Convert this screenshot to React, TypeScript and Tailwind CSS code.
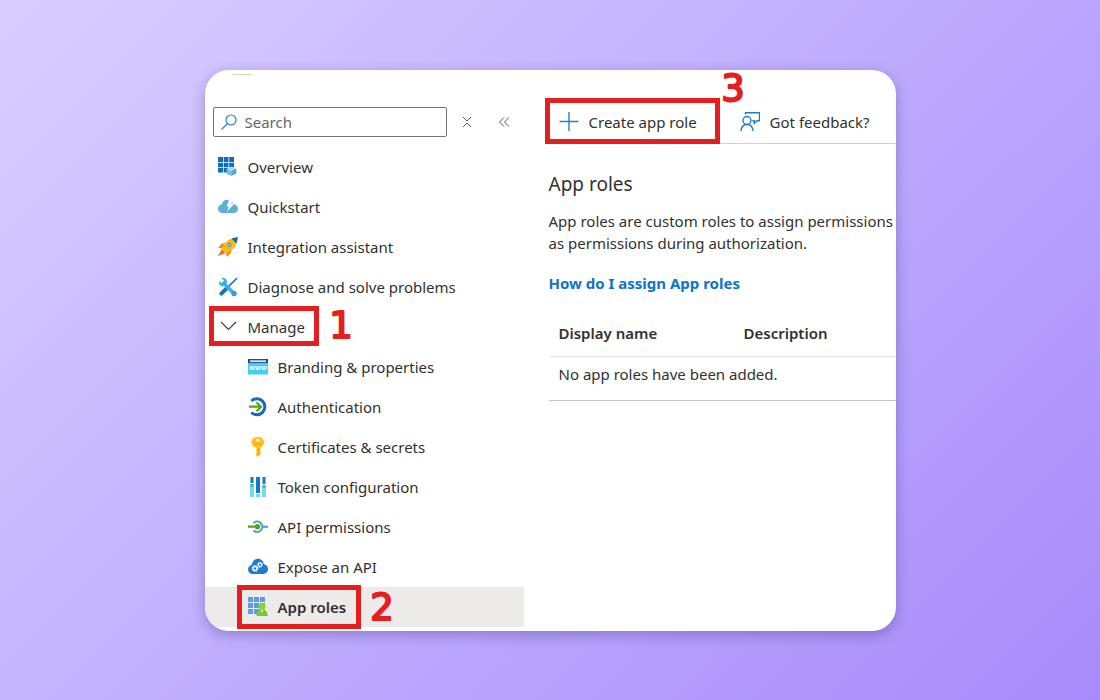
import type { ReactNode } from 'react';

interface NavItem {
  label: string;
  icon: ReactNode;
}

const icon = 'block size-5 shrink-0';

function OverviewIcon() {
  return (
    <svg className={icon} viewBox="0 0 20 20">
      <path fill="#0f6cbd" d="M0 0h5v5H0zM5.700 0h4.800v5H5.700zM11.200 0H16v5h-4.800zM0 5.700h5v4.600H0zM5.700 5.700h4.800v4.600H5.700zM11.200 5.700H16v4.600h-4.800zM0 11h5v4.500H0zM5.700 11h4.800v4.500H5.700z" />
      <path fill="#a5ddf4" d="M8.500 12l5-2.500 4.800 2-5 2.500z" />
      <path fill="#78c0ea" d="M8.500 12l4.800 2v5L8.500 17z" />
      <path fill="#559fd8" d="M18.300 11.500v5L13.300 19v-5z" />
    </svg>
  );
}

function QuickstartIcon() {
  return (
    <svg className={icon} viewBox="0 0 20 20">
      <path fill="#5ab0d6" d="M4.500 16A4.400 4.400 0 0 1 0 11.700c0-2.200 1.600-3.800 3.700-4.100C4.300 4.500 6.500 2.700 9.300 2.700c2.900 0 5 1.800 5.700 4.600 2.800 0 5 1.900 5 4.400 0 2.400-1.900 4.300-4.400 4.300z" />
      <path fill="#fff" d="M11.300 2H16l-3 5h3L9 14.500l2-5H8.500z" />
    </svg>
  );
}

function RocketIcon() {
  return (
    <svg className={icon} viewBox="0 0 20 20">
      <path fill="#f78d1e" d="M8 6L3.500 6.500 0 11l5 .5zM13.500 11.500l-.5 4.500L8.500 20 8 14z" />
      <path fill="#ef6c1a" d="M4 12L0 19 7.500 16z" />
      <path fill="#ffb81c" d="M14 1.300C9.500 2.800 6 6.500 3.500 11.500L8.500 16c5-2 9-6 10.500-10.500z" />
      <path fill="#1464a5" d="M20 0l-6.500 1.500 5 5z" />
      <circle cx="11.500" cy="8" r="2" fill="#2a86c8" />
      <circle cx="11.500" cy="8" r="1.100" fill="#b9e4f8" />
    </svg>
  );
}

function ToolsIcon() {
  return (
    <svg className={icon} viewBox="0 0 20 20" fill="none" strokeLinecap="round">
      <path stroke="#1674c5" strokeWidth="1.700" d="M18.500 1.500L9 11" />
      <path stroke="#1674c5" strokeWidth="4" d="M8 12l-4.700 4.700" />
      <path stroke="#32b4e3" strokeWidth="3.500" d="M5.500 6L16 16.500" />
      <path fill="#32b4e3" d="M3.500 1L6 3.500 5.600 6 3.500 6.200 1.200 4C.3 6.500 2 9.300 4.500 9.300 7 9.300 9.300 7 9 4.500 8.800 2 6 .3 3.500 1z" />
      <circle cx="16" cy="16.500" r="2.700" fill="#2a9fdb" />
    </svg>
  );
}

function BrandingIcon() {
  return (
    <svg className={icon} viewBox="0 0 20 20">
      <path fill="#43cff0" d="M0 6h20v11.500H0z" />
      <path fill="#0f4f96" d="M0 2h20v4H0z" />
      <path fill="#d9edf9" d="M2 3.300h16v1.800H2z" />
      <text
        x="10"
        y="13"
        textAnchor="middle"
        fontSize="7"
        fill="#fff"
        className="font-['Noto_Sans',sans-serif] font-semibold"
      >
        www
      </text>
    </svg>
  );
}

function AuthenticationIcon() {
  return (
    <svg className={icon} viewBox="0 0 20 20" fill="none">
      <path stroke="#0f6cbd" strokeWidth="3" d="M3.300 4A8 8 0 1 1 3.300 15.500" />
      <path stroke="#56a60f" strokeWidth="2.200" d="M1 9.700h12M8.500 5.200L13 9.700l-4.500 4.500" />
    </svg>
  );
}

function KeyIcon() {
  return (
    <svg className={icon} viewBox="0 0 20 20">
      <path fill="#ffbe1a" d="M9 0h1.500C14 0 16 2.500 16 5.300c0 2.500-1.300 4.400-3.500 5.200v7L9.700 20 8 18v-2l1-1-1-1v-1.200l1-1-1-1v-.3C5 9.700 3.500 7.800 3.500 5.300 3.500 2.500 5.500 0 9 0z" />
      <circle cx="9.800" cy="3.200" r="1.700" fill="#fff3d1" />
      <path fill="#e8a316" d="M7 6.500h5.500v1H7zM10.500 11h1v6.500h-1z" />
    </svg>
  );
}

function TokenIcon() {
  return (
    <svg className={icon} viewBox="0 0 20 20">
      <path fill="#6edcf0" d="M2 7h4v13H2zM8 17h4v3H8zM14 8h4v12h-4z" />
      <path fill="#1677c8" d="M2.500 0h3v6h-3zM8 0h4v16H8zM14.500 0h3v7h-3z" />
      <path fill="#43bde0" d="M2 7h4v3H2zM14 8h4v3h-4z" />
    </svg>
  );
}

function PermissionsIcon() {
  return (
    <svg className={icon} viewBox="0 0 20 20" fill="none">
      <path stroke="#3f9dc9" strokeWidth="2" d="M5.500 6A5.200 5.200 0 1 1 5.500 13.500M15 9.700h5" />
      <path stroke="#56a60f" strokeWidth="2.200" d="M0 9.700h9" />
      <circle cx="9.500" cy="9.700" r="2.700" fill="#56a60f" />
    </svg>
  );
}

function ExposeIcon() {
  return (
    <svg className={icon} viewBox="0 0 20 20">
      <path fill="#217bd3" d="M4.500 17A4.500 4.500 0 0 1 0 12.500C0 10.200 1.600 8.400 3.700 8 4.300 4.300 6.700 1.700 10 1.700c3.200 0 5.500 2.400 5.900 5.600 2.400.3 4.100 2.300 4.100 4.800 0 2.700-2 4.900-4.700 4.900z" />
      <circle cx="7" cy="11.500" r="2" fill="none" stroke="#fff" strokeWidth="1.300" />
      <circle cx="7" cy="11.500" r="3" fill="none" stroke="#fff" strokeDasharray="1.200 1.200" />
      <circle cx="12" cy="7.800" r="1.700" fill="none" stroke="#fff" strokeWidth="1.200" />
      <circle cx="12" cy="7.800" r="2.600" fill="none" stroke="#fff" strokeDasharray="1 1" />
    </svg>
  );
}

function AppRolesIcon() {
  return (
    <svg className={icon} viewBox="0 0 20 20">
      <path fill="#5e9be6" d="M0 0h5v5H0zM6 0h5v5H6zM12 0h5v5h-5zM0 6h5v5H0zM6 6h5v5H6zM12 6h5v5h-5zM0 12h5v5H0zM6 12h5v5H6z" />
      <path fill="#7ac42c" d="M8.500 19c0-4.200 1.700-6.500 5.500-6.500s5.700 2.300 5.700 6.500z" />
      <circle cx="14" cy="9.500" r="3.600" fill="#86d633" />
      <path fill="#d9f3b8" d="M12.800 13h2.600L14 16.500z" />
    </svg>
  );
}

const topItems: NavItem[] = [
  { label: 'Overview', icon: <OverviewIcon /> },
  { label: 'Quickstart', icon: <QuickstartIcon /> },
  { label: 'Integration assistant', icon: <RocketIcon /> },
  { label: 'Diagnose and solve problems', icon: <ToolsIcon /> },
];

const manageItems: NavItem[] = [
  { label: 'Branding & properties', icon: <BrandingIcon /> },
  { label: 'Authentication', icon: <AuthenticationIcon /> },
  { label: 'Certificates & secrets', icon: <KeyIcon /> },
  { label: 'Token configuration', icon: <TokenIcon /> },
  { label: 'API permissions', icon: <PermissionsIcon /> },
  { label: 'Expose an API', icon: <ExposeIcon /> },
];

function StepNumber({ value, className }: { value: string; className: string }) {
  return (
    <svg
      className={`pointer-events-none absolute h-12 w-10 overflow-visible ${className}`}
      viewBox="0 0 40 48"
    >
      <text
        x="20"
        y="37"
        textAnchor="middle"
        fontSize="37"
        fill="#e3201f"
        stroke="#e3201f"
        strokeWidth="2"
        strokeLinejoin="round"
        className="font-['DejaVu_Sans',sans-serif] font-normal"
      >
        {value}
      </text>
    </svg>
  );
}

function NavLink({ item }: { item: NavItem }) {
  return (
    <a href="#" className="flex h-10 items-center gap-2.5 whitespace-nowrap">
      {item.icon}
      {item.label}
    </a>
  );
}

function Sidebar() {
  return (
    <aside className="w-[319px] shrink-0 pb-1">
      <div className="mt-1 ml-7 h-px w-[18px] bg-[#c9dba6]" />
      <div className="mt-8 flex items-center pl-2">
        <label className="flex h-[30px] w-[234px] items-center gap-2 rounded-xs border border-[#757575] px-[7px]">
          <svg className="size-4 shrink-0" viewBox="0 0 16 16" fill="none" stroke="#2f86cc" strokeWidth="1.200">
            <circle cx="10" cy="6" r="5" />
            <path d="M6.500 9.500L.5 15.500" />
          </svg>
          <input
            type="text"
            placeholder="Search"
            aria-label="Search"
            className="w-full min-w-0 bg-transparent outline-none placeholder:text-[#666]"
          />
        </label>
        <button type="button" aria-label="Clear" className="ml-3.5">
          <svg className="size-3" viewBox="0 0 12 12" fill="none" stroke="#555">
            <path d="M2 1l4 4 4-4M2 11l4-4 4 4" />
          </svg>
        </button>
        <button type="button" aria-label="Collapse menu" className="ml-[25px]">
          <svg className="size-3" viewBox="0 0 12 12" fill="none" stroke="#555">
            <path d="M6 1.500L1.500 6 6 10.500M11 1.500L6.500 6l4.500 4.500" />
          </svg>
        </button>
      </div>

      <nav className="mt-2.5">
        <ul>
          {topItems.map((item) => (
            <li key={item.label} className="pl-[13px]">
              <NavLink item={item} />
            </li>
          ))}
          <li className="relative">
            <button type="button" className="flex h-10 items-center gap-2.5 pl-[13px]">
              <svg className={icon} viewBox="0 0 20 20" fill="none" stroke="#444" strokeWidth="1.200">
                <path d="M3 5l7.500 7.500L18 5" />
              </svg>
              Manage
            </button>
            <span className="pointer-events-none absolute -top-px left-1 h-10 w-[110px] border-5 border-[#e3201f]" />
            <StepNumber value="1" className="-top-1.5 left-[116px]" />
          </li>
          {manageItems.map((item) => (
            <li key={item.label} className="pl-[43px]">
              <NavLink item={item} />
            </li>
          ))}
          <li className="relative bg-[#ecebea] pl-[43px] font-semibold">
            <NavLink item={{ label: 'App roles', icon: <AppRolesIcon /> }} />
            <span className="pointer-events-none absolute -top-0.5 left-8 h-11 w-[124px] border-5 border-[#e3201f]" />
            <StepNumber value="2" className="-top-1 left-[157px]" />
          </li>
        </ul>
      </nav>
    </aside>
  );
}

function Toolbar() {
  return (
    <div className="relative mt-[30px] flex h-11 items-center gap-[43px] border-b border-[#d2d0ce] pt-0.5">
      <button type="button" className="flex items-center gap-2.5 pl-2.5 whitespace-nowrap">
        <svg className={icon} viewBox="0 0 20 20" fill="none" stroke="#2080cc" strokeWidth="1.400">
          <path d="M10 0v19M.5 9.500h19" />
        </svg>
        Create app role
      </button>
      <button type="button" className="flex items-center gap-2.5 whitespace-nowrap">
        <svg className={icon} viewBox="0 0 20 20" fill="none" stroke="#1f7cc4" strokeWidth="1.400">
          <circle cx="7" cy="8.500" r="4" />
          <path d="M1 19C1.300 15 3.800 12.500 7 12.500s5.700 2.500 6 6.500" />
          <path d="M5.500 2.500V.7h14v8H17l-2.700 2.700V8.700h-2" />
        </svg>
        Got feedback?
      </button>
      <span className="pointer-events-none absolute -top-0.5 -left-1 h-[46px] w-[175px] border-5 border-[#e3201f]" />
      <StepNumber value="3" className="-top-9 left-[164px]" />
    </div>
  );
}

function RolesTable() {
  return (
    <table className="mt-[19px] w-full text-left whitespace-nowrap">
      <thead>
        <tr className="h-11 border-b border-[#e4e3e2]">
          <th className="w-[195px] pb-0.5 pl-2.5 font-semibold">Display name</th>
          <th className="pb-0.5 font-semibold">Description</th>
        </tr>
      </thead>
      <tbody>
        <tr className="h-11 border-b border-[#c4c3c2]">
          <td colSpan={2} className="pb-2.5 pl-2.5">
            No app roles have been added.
          </td>
        </tr>
      </tbody>
    </table>
  );
}

export default function App() {
  return (
    <div className="flex min-h-screen items-center justify-center bg-linear-135 from-[#d9ceff] to-[#a78bfa] font-['Noto_Sans',sans-serif] text-[15px] leading-[22px] text-[#323130]">
      <div className="flex w-full max-w-[691px] overflow-hidden rounded-3xl bg-white shadow-[0_4px_14px_rgba(40,20,90,0.3)]">
        <Sidebar />
        <main className="ml-[25px] min-w-0 flex-1">
          <Toolbar />
          <h1 className="mt-[27px] text-[19px] leading-[26px]">App roles</h1>
          <p className="mt-[13px] whitespace-nowrap">
            App roles are custom roles to assign permissions
            <br />
            as permissions during authorization.
          </p>
          <a href="#" className="mt-[18px] block font-bold text-[#0f73c4]">
            How do I assign App roles
          </a>
          <RolesTable />
        </main>
      </div>
    </div>
  );
}
